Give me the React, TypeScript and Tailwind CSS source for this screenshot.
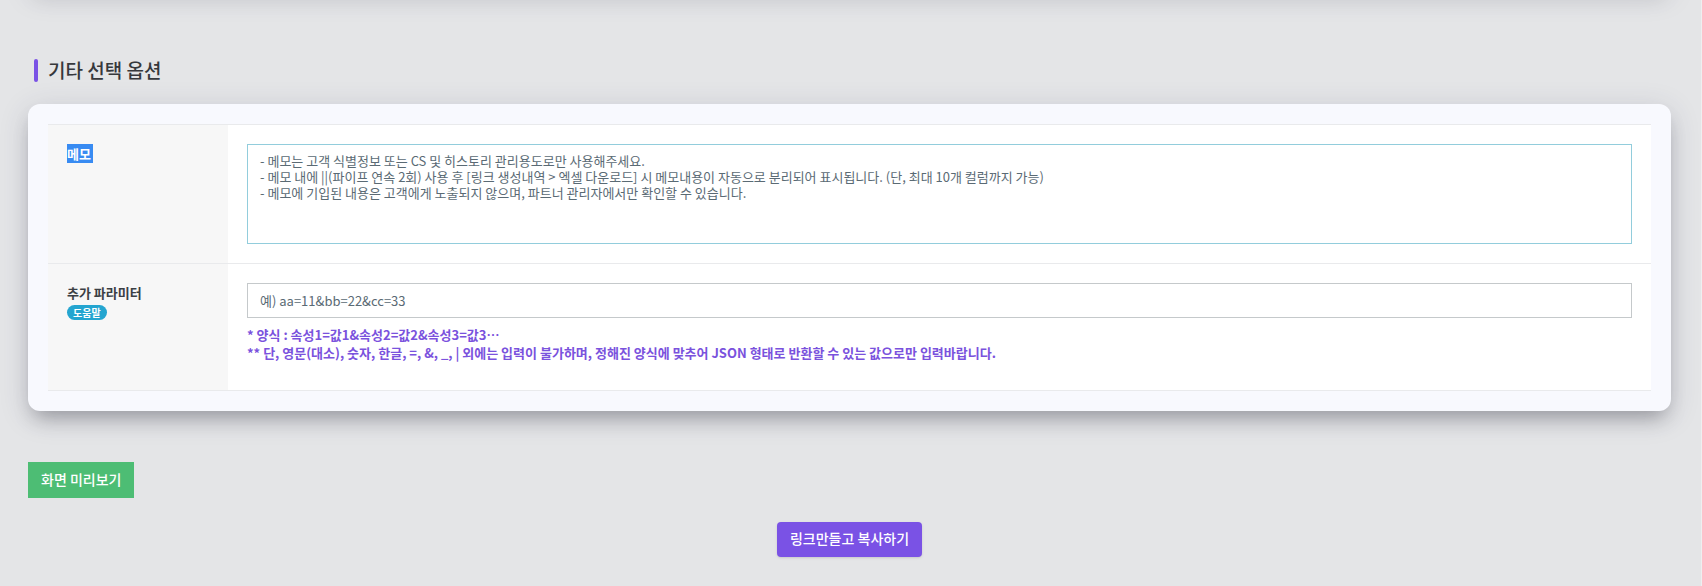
import type { ReactNode } from "react";

const cardStyles =
  "rounded-xl bg-[#f8f9fe] shadow-[0_6px_30px_rgba(50,50,93,0.16),0_12px_20px_-6px_rgba(0,0,0,0.28)]";

const fieldStyles =
  "block w-full border bg-white px-3 text-[13px] text-[#495c68] outline-none placeholder:text-[#5a6a74] placeholder:opacity-100";

const buttonStyles = "px-[13px] pb-0.5 text-[14px] font-medium text-white";

const memoHint = [
  "- 메모는 고객 식별정보 또는 CS 및 히스토리 관리용도로만 사용해주세요.",
  "- 메모 내에 ||(파이프 연속 2회) 사용 후 [링크 생성내역 > 엑셀 다운로드] 시 메모내용이 자동으로 분리되어 표시됩니다. (단, 최대 10개 컬럼까지 가능)",
  "- 메모에 기입된 내용은 고객에게 노출되지 않으며, 파트너 관리자에서만 확인할 수 있습니다.",
].join("\n");

function OptionRow({ head, children }: { head: ReactNode; children: ReactNode }) {
  return (
    <div className="flex border-t border-[#e9eaec]">
      <div className="w-45 shrink-0 bg-[#f7f7f7] px-[19px] py-[19px] text-[13px] leading-[19px] font-bold text-[#3b3f45]">
        {head}
      </div>
      <div className="min-w-0 flex-1 bg-white px-[19px] py-[19px]">{children}</div>
    </div>
  );
}

export default function App() {
  return (
    <div className="min-h-screen overflow-hidden border-r border-[#eeeff0] bg-[#e4e5e7] pr-[30px] pb-7 pl-7 font-['Noto_Sans_CJK_KR','Noto_Sans',sans-serif]">
      {/* bottom edge of the previous section */}
      <div aria-hidden className={`-mt-7 h-4 ${cardStyles}`} />

      <h2 className="mt-[71px] ml-1.5 flex items-start gap-2.5 text-[19px] leading-[21px] font-medium text-[#36383c]">
        <span aria-hidden className="h-[23px] w-1 rounded-xs bg-[#7a52e5]" />
        기타 선택 옵션
      </h2>

      <section className={`mt-[22px] p-5 ${cardStyles}`}>
        <div className="border-b border-[#e9eaec]">
          <OptionRow
            head={
              <label htmlFor="memo" className="inline-block bg-[#388bf2] pr-0.5 align-top text-white">
                메모
              </label>
            }
          >
            <textarea
              id="memo"
              placeholder={memoHint}
              className={`h-25 resize-none border-[#92cddc] py-2 leading-4 ${fieldStyles}`}
            />
          </OptionRow>

          <OptionRow
            head={
              <>
                <label htmlFor="params" className="block">
                  추가 파라미터
                </label>
                <a
                  href="#help"
                  className="mt-[3px] inline-block rounded-full bg-[#24a5d0] px-1.5 align-top text-[10px] leading-[15px] text-white"
                >
                  도움말
                </a>
              </>
            }
          >
            <input
              id="params"
              type="text"
              placeholder="예) aa=11&bb=22&cc=33"
              className={`h-[35px] border-[#c5c9cb] ${fieldStyles}`}
            />
            <p className="mt-2 mb-[9px] text-[13px] leading-[18px] font-bold text-[#7a52dd]">
              * 양식 : 속성1=값1&속성2=값2&속성3=값3…
              <br />
              ** 단, 영문(대소), 숫자, 한글, =, &, _, | 외에는 입력이 불가하며, 정해진 양식에 맞추어 JSON 형태로 반환할 수
              있는 값으로만 입력바랍니다.
            </p>
          </OptionRow>
        </div>
      </section>

      <button type="button" className={`mt-[51px] block h-9 bg-[#4dbd74] ${buttonStyles}`}>
        화면 미리보기
      </button>

      <div className="mt-6 flex justify-center">
        <button type="button" className={`h-[35px] rounded bg-[#7a52e5] shadow-sm ${buttonStyles}`}>
          링크만들고 복사하기
        </button>
      </div>
    </div>
  );
}
